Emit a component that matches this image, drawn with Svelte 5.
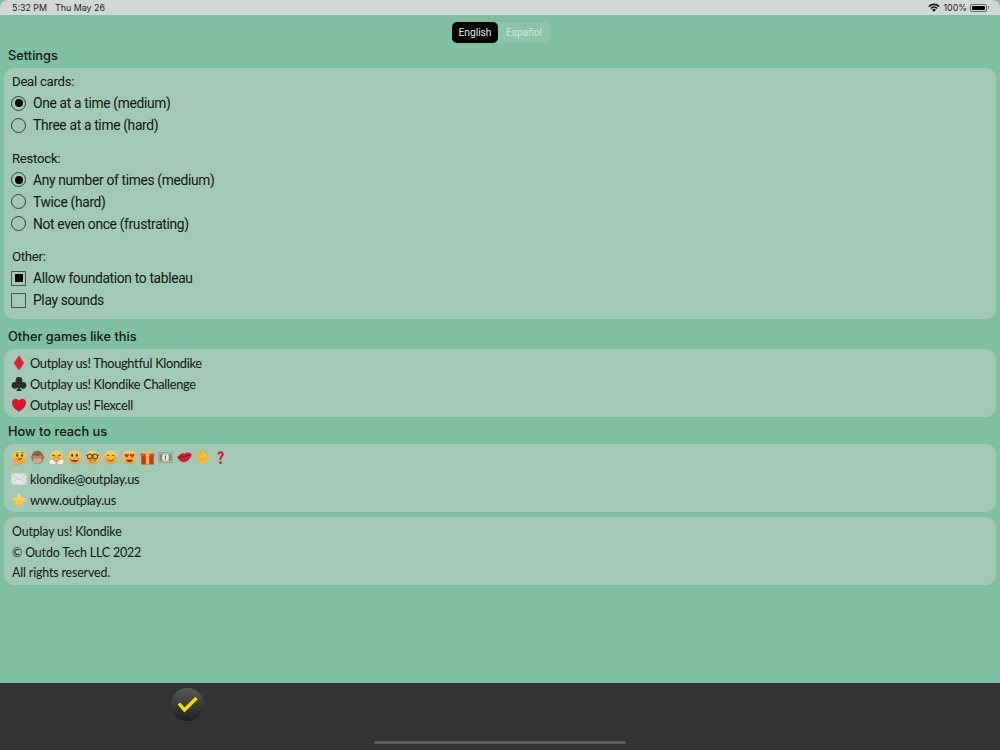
<script>
    const dealOptions = [
        { label: 'One at a time (medium)', on: true },
        { label: 'Three at a time (hard)', on: false }
    ];
    const restockOptions = [
        { label: 'Any number of times (medium)', on: true },
        { label: 'Twice (hard)', on: false },
        { label: 'Not even once (frustrating)', on: false }
    ];
    const otherOptions = [
        { label: 'Allow foundation to tableau', on: true },
        { label: 'Play sounds', on: false }
    ];
    const games = [
        { suit: 'diamond', label: 'Outplay us! Thoughtful Klondike' },
        { suit: 'club', label: 'Outplay us! Klondike Challenge' },
        { suit: 'heart', label: 'Outplay us! Flexcell' }
    ];
    const faces = ['think', 'monkey', 'huff', 'smile', 'nerd', 'blush', 'love', 'gift', 'money', 'lips', 'wave', 'mark'];
</script>

<div class="screen">
    <svg class="defs" width="0" height="0">
        <defs>
            <linearGradient id="face" x1="0" y1="0" x2="0" y2="1">
                <stop offset="0" stop-color="#fbd75c" />
                <stop offset="1" stop-color="#ee9f2a" />
            </linearGradient>
            <linearGradient id="star" x1="0" y1="0" x2="0" y2="1">
                <stop offset="0" stop-color="#fbe27a" />
                <stop offset="1" stop-color="#f4b92f" />
            </linearGradient>
        </defs>
    </svg>

    <div class="statusbar">
        <span class="time">5:32 PM</span>
        <span class="date">Thu May 26</span>
        <span class="status-right">
            <svg width="12" height="9" viewBox="0 0 12 9" class="wifi">
                <path d="M0.3 3 A8 8 0 0 1 11.7 3 L10.6 4.1 A6.4 6.4 0 0 0 1.4 4.1 Z" fill="#111" />
                <path d="M2.2 4.9 A5.4 5.4 0 0 1 9.8 4.9 L8.7 6 A3.8 3.8 0 0 0 3.3 6 Z" fill="#111" />
                <path d="M4.1 6.8 A2.7 2.7 0 0 1 7.9 6.8 L6 8.8 Z" fill="#111" />
            </svg>
            <span>100%</span>
            <span class="battery"><span class="battery-fill"></span></span>
            <span class="battery-tip"></span>
        </span>
    </div>

    <div class="content">
        <div class="lang-row">
            <div class="lang">
                <button type="button" class="lang-btn active">English</button>
                <button type="button" class="lang-btn">Español</button>
            </div>
        </div>

        <h2 class="title first">Settings</h2>
        <section class="card settings">
            <div class="group-label">Deal cards:</div>
            {#each dealOptions as opt}
                <div class="option">
                    <span class="radio" class:on={opt.on}></span>{opt.label}
                </div>
            {/each}
            <div class="group-label spaced">Restock:</div>
            {#each restockOptions as opt}
                <div class="option">
                    <span class="radio" class:on={opt.on}></span>{opt.label}
                </div>
            {/each}
            <div class="group-label spaced">Other:</div>
            {#each otherOptions as opt}
                <div class="option">
                    <span class="check" class:on={opt.on}></span>{opt.label}
                </div>
            {/each}
        </section>

        <h2 class="title after-settings">Other games like this</h2>
        <section class="card links">
            {#each games as game}
                <div class="link">
                    <svg class="icon" width="16" height="16" viewBox="0 0 16 16">
                        {#if game.suit === 'diamond'}
                            <path d="M8 0.5 L13.2 8 L8 15.5 L2.8 8 Z" fill="#e0202c" />
                        {:else if game.suit === 'club'}
                            <circle cx="8" cy="4.4" r="3.4" fill="#2b2b2b" />
                            <circle cx="4" cy="9.3" r="3.4" fill="#2b2b2b" />
                            <circle cx="12" cy="9.3" r="3.4" fill="#2b2b2b" />
                            <path d="M7.2 7 H8.8 L9.2 13 L11 15 H5 L6.8 13 Z" fill="#2b2b2b" />
                        {:else}
                            <path d="M8 15 C4 12 1 9.6 1 5.8 C1 3.4 2.8 1.8 4.6 1.8 C6 1.8 7.2 2.5 8 3.8 C8.8 2.5 10 1.8 11.4 1.8 C13.2 1.8 15 3.4 15 5.8 C15 9.6 12 12 8 15 Z" fill="#d8152c" />
                        {/if}
                    </svg>
                    {game.label}
                </div>
            {/each}
        </section>

        <h2 class="title">How to reach us</h2>
        <section class="card links">
            <div class="emoji-row">
                {#each faces as face}
                    <svg class="emoji" width="15" height="15" viewBox="0 0 14 14">
                        {#if face === 'gift'}
                            <rect x="1.2" y="3.5" width="11.6" height="10" rx="0.6" fill="#bd3a26" />
                            <rect x="5.4" y="3.5" width="3.2" height="10" fill="#efb93a" />
                            <rect x="0.6" y="3.2" width="12.8" height="3" rx="0.5" fill="#d4482e" />
                            <rect x="5.4" y="3.2" width="3.2" height="3" fill="#f6cc4e" />
                            <path d="M7 3.4 L3.2 0.3 L1.8 3 Z M7 3.4 L10.8 0.3 L12.2 3 Z" fill="#f0c040" />
                        {:else if face === 'money'}
                            <rect x="0" y="2.4" width="14" height="9.2" rx="0.5" fill="#aebca0" stroke="#84937a" stroke-width="0.6" />
                            <rect x="1.4" y="3.8" width="2.4" height="6.4" fill="#7f8d74" />
                            <rect x="10.2" y="3.8" width="2.4" height="6.4" fill="#7f8d74" />
                            <circle cx="7" cy="7" r="3" fill="#f1eedc" />
                            <path d="M7 5 V9" stroke="#5f6e54" stroke-width="1.1" />
                        {:else if face === 'lips'}
                            <path d="M0.3 6.6 C3 3.6 5 2.4 7.2 3.4 C9.6 1.6 12.4 2.6 13.7 3.8 C13 8.4 9.4 11.6 5.8 11.4 C3.2 11.2 1.2 9 0.3 6.6 Z" fill="#cb1f35" />
                            <path d="M1.8 6.8 C5 6.2 9 6 12.6 4.4" stroke="#7e0d1d" stroke-width="0.8" fill="none" />
                        {:else if face === 'wave'}
                            <ellipse cx="7.4" cy="9.4" rx="4" ry="4.2" fill="#f3b93a" />
                            <path d="M3.9 9 L1.7 5 M5.6 7 L3.6 2.6 M7.8 6.6 L6.2 1.4 M9.8 7 L8.9 2.4" stroke="#d9952a" stroke-width="2.5" stroke-linecap="round" />
                            <path d="M3.9 9 L1.7 5 M5.6 7 L3.6 2.6 M7.8 6.6 L6.2 1.4 M9.8 7 L8.9 2.4" stroke="#f7c94c" stroke-width="1.8" stroke-linecap="round" />
                            <path d="M10.6 10 L12.4 5.6" stroke="#f3b93a" stroke-width="2.2" stroke-linecap="round" />
                        {:else if face === 'mark'}
                            <path d="M4.2 4 C4.2 0.3 10 0.3 10 4 C10 6.2 7.9 6.3 7.9 9 H6.1 C6.1 5.7 8 5.6 8 4 C8 2.6 6.2 2.6 6.1 4.2 Z" fill="#d8151f" />
                            <circle cx="7" cy="11.8" r="1.2" fill="#d8151f" />
                        {:else if face === 'monkey'}
                            <circle cx="1.6" cy="6.6" r="1.5" fill="#c99674" />
                            <circle cx="12.4" cy="6.6" r="1.5" fill="#c99674" />
                            <ellipse cx="7" cy="7" rx="5.6" ry="6.4" fill="#8d5f43" />
                            <ellipse cx="7" cy="9.4" rx="4.4" ry="3.6" fill="#d3a583" />
                            <path d="M2 6.4 C3.4 4.6 5.6 5 6.8 6.6 C8.2 5 10.6 4.6 12 6.4 L11 8 H3 Z" fill="#b9805e" />
                        {:else}
                            <circle cx="7" cy="7" r="6.6" fill="url(#face)" />
                            {#if face === 'love'}
                                <path d="M4.4 7.4 L2.3 5 C2.1 3.4 4 3.1 4.4 4.4 C4.8 3.1 6.7 3.4 6.5 5 Z M9.6 7.4 L7.5 5 C7.3 3.4 9.2 3.1 9.6 4.4 C10 3.1 11.9 3.4 11.7 5 Z" fill="#d9263a" />
                                <path d="M3.8 9 C5 11.8 9 11.8 10.2 9 Z" fill="#7a2a1c" />
                            {:else if face === 'nerd'}
                                <path d="M1 5 L13 5" stroke="#6b3f1c" stroke-width="0.9" />
                                <circle cx="4.5" cy="6" r="2.2" fill="#d9c25a" stroke="#6b3f1c" stroke-width="1" />
                                <circle cx="9.5" cy="6" r="2.2" fill="#d9c25a" stroke="#6b3f1c" stroke-width="1" />
                                <path d="M4 9.6 C5.5 11.6 8.5 11.6 10 9.6 Z" fill="#fff" stroke="#7a3f1c" stroke-width="0.6" />
                            {:else if face === 'huff'}
                                <path d="M3 4.6 L6 5.8 M11 4.6 L8 5.8" stroke="#5b3a1e" stroke-width="0.9" />
                                <path d="M4.5 7.8 H9.5 V9.4 H4.5 Z" fill="#fff" stroke="#7a3f1c" stroke-width="0.5" />
                                <circle cx="2.6" cy="11" r="2.2" fill="#f6f6f2" />
                                <circle cx="11.4" cy="11" r="2.2" fill="#f6f6f2" />
                                <circle cx="4.8" cy="12" r="1.4" fill="#f6f6f2" />
                                <circle cx="9.2" cy="12" r="1.4" fill="#f6f6f2" />
                            {:else if face === 'think'}
                                <path d="M3.4 3.4 C4.2 2.6 5.4 2.6 6 3.2 M8.2 2.6 C9 2 10.2 2.2 10.8 3" stroke="#4a2c12" stroke-width="0.7" fill="none" />
                                <ellipse cx="4.8" cy="5.2" rx="0.9" ry="1.2" fill="#4a2c12" />
                                <ellipse cx="9.4" cy="5.2" rx="0.9" ry="1.2" fill="#4a2c12" />
                                <path d="M5.6 8.8 L9.4 8" stroke="#4a2c12" stroke-width="0.9" />
                                <path d="M2 14 C1.6 12 2.6 11 3 9.4 C3.4 8 4.6 8 4.8 9.4 L7.6 10 C8.6 10.6 8 12 7 12 C7 13.2 6.4 14 5.4 14 Z" fill="#f2b53b" stroke="#c98620" stroke-width="0.4" />
                            {:else if face === 'blush'}
                                <path d="M3.4 5.6 C4 4.6 5.2 4.6 5.8 5.6 M8.2 5.6 C8.8 4.6 10 4.6 10.6 5.6" stroke="#4a2c12" stroke-width="0.8" fill="none" />
                                <path d="M4 8.6 C5.4 10.8 8.6 10.8 10 8.6" stroke="#6a3418" stroke-width="0.9" fill="none" />
                                <circle cx="3" cy="7.6" r="1.2" fill="#f39a5a" />
                                <circle cx="11" cy="7.6" r="1.2" fill="#f39a5a" />
                            {:else}
                                <ellipse cx="4.8" cy="4.8" rx="0.9" ry="1.4" fill="#4a2c12" />
                                <ellipse cx="9.2" cy="4.8" rx="0.9" ry="1.4" fill="#4a2c12" />
                                <path d="M2.8 7.4 C5 8.2 9 8.2 11.2 7.4 C10.8 12.2 3.2 12.2 2.8 7.4 Z" fill="#6a2a14" />
                                <path d="M3.4 7.8 C5.5 8.4 8.5 8.4 10.6 7.8 L10.4 9 H3.6 Z" fill="#fff" />
                            {/if}
                        {/if}
                    </svg>
                {/each}
            </div>
            <div class="link">
                <svg class="icon" width="16" height="16" viewBox="0 0 16 16">
                    <rect x="0.5" y="2.5" width="15" height="11" rx="1" fill="#e2e5e5" />
                    <path d="M1 3 L8 9 L15 3 M1 13 L6 7.5 M15 13 L10 7.5" stroke="#b4b9b9" stroke-width="0.7" fill="none" />
                </svg>
                klondike@outplay.us
            </div>
            <div class="link">
                <svg class="icon" width="16" height="16" viewBox="0 0 16 16">
                    <path d="M8 0.8 L10.2 5.6 L15.4 6.2 L11.5 9.7 L12.6 14.9 L8 12.3 L3.4 14.9 L4.5 9.7 L0.6 6.2 L5.8 5.6 Z" fill="url(#star)" />
                </svg>
                www.outplay.us
            </div>
        </section>

        <section class="card about">
            <div class="about-line">Outplay us! Klondike</div>
            <div class="about-line">© Outdo Tech LLC 2022</div>
            <div class="about-line">All rights reserved.</div>
        </section>
    </div>

    <div class="toolbar">
        <div class="done">
            <svg width="22" height="18" viewBox="0 0 22 18">
                <path d="M2 7.5 L7.5 14 L19.5 2" stroke="#fbdc00" stroke-width="3.4" fill="none" />
            </svg>
        </div>
        <div class="home-bar"></div>
    </div>
</div>

<style>
    :global(body) {
        margin: 0;
    }

    .defs {
        position: absolute;
    }

    .screen {
        width: 1000px;
        height: 750px;
        display: flex;
        flex-direction: column;
        overflow: hidden;
        background: #80c0a2;
        color: #101512;
        font-family: Roboto, "Liberation Sans", sans-serif;
    }

    .statusbar {
        height: 15px;
        flex: none;
        display: flex;
        align-items: center;
        padding: 0 11px 0 12px;
        background: #d3d7d5;
        font-family: Inter, "Liberation Sans", sans-serif;
        font-size: 8.9px;
        color: #222;
        border-radius: 8px 8px 0 0;
    }

    .date {
        margin-left: 8px;
    }

    .status-right {
        margin-left: auto;
        display: flex;
        align-items: center;
        gap: 2px;
    }

    .wifi {
        margin-right: 1px;
    }

    .battery {
        width: 17px;
        height: 8px;
        margin-left: 1px;
        padding: 1px;
        box-sizing: border-box;
        border: 0.5px solid #666;
        border-radius: 2px;
        display: flex;
    }

    .battery-fill {
        flex: 1;
        background: #000;
        border-radius: 1px;
    }

    .battery-tip {
        width: 1px;
        height: 3px;
        margin-left: -1px;
        background: #777;
    }

    .content {
        flex: 1;
        padding: 7px 4px 0;
    }

    .lang-row {
        display: flex;
        justify-content: center;
    }

    .lang {
        display: flex;
        margin-left: 2px;
        background: #8dc5ab;
        border-radius: 5px;
        width: 98px;
    }

    .lang-btn {
        height: 21px;
        padding: 0;
        border: none;
        border-radius: 5px;
        background: transparent;
        color: #d2e6dc;
        font: 400 10.2px Roboto, "Liberation Sans", sans-serif;
        flex: 1;
    }

    .lang-btn.active {
        flex: none;
        width: 46px;
        background: #000;
        color: #e8e8e8;
    }

    .title {
        margin: 0;
        padding: 7px 0 4px 4px;
        font-family: Inter, "Liberation Sans", sans-serif;
        font-size: 12.8px;
        font-weight: 500;
        line-height: 16px;
    }

    .title.first {
        padding-top: 5px;
    }

    .title.after-settings {
        padding-top: 10px;
    }

    .card {
        background: #a1c9b5;
        border-radius: 10px;
        padding-left: 7px;
    }

    .settings {
        padding-top: 4px;
        padding-bottom: 8px;
    }

    .group-label {
        font-size: 13.2px;
        letter-spacing: -0.27px;
        line-height: 20px;
        padding-left: 1px;
    }

    .group-label.spaced {
        margin-top: 13.5px;
        line-height: 18px;
        padding-bottom: 1px;
    }

    .option {
        display: flex;
        align-items: center;
        height: 22px;
        font-size: 13.8px;
        letter-spacing: -0.33px;
    }

    .radio {
        width: 15px;
        height: 15px;
        margin: 0 7px 0 0;
        box-sizing: border-box;
        border: 1.4px solid #2c3d35;
        border-radius: 50%;
        display: flex;
        align-items: center;
        justify-content: center;
        flex: none;
    }

    .radio.on::after {
        content: "";
        width: 8px;
        height: 8px;
        background: #000;
        border-radius: 50%;
    }

    .check {
        width: 15px;
        height: 15px;
        margin: 0 7px 0 0;
        box-sizing: border-box;
        border: 1.5px solid #42564c;
        display: flex;
        align-items: center;
        justify-content: center;
        flex: none;
    }

    .check.on::after {
        content: "";
        width: 8px;
        height: 8px;
        background: #000;
    }

    .links {
        padding-top: 3px;
        padding-bottom: 2px;
    }

    .link {
        display: flex;
        align-items: center;
        gap: 3px;
        height: 21px;
        font-family: Lato, "Liberation Sans", sans-serif;
        font-size: 12.8px;
        letter-spacing: -0.3px;
    }

    .icon {
        flex: none;
    }

    .emoji-row {
        display: flex;
        align-items: center;
        gap: 3.3px;
        height: 21px;
        padding-left: 1px;
    }

    .about {
        margin-top: 5px;
        padding-top: 5px;
        padding-bottom: 1px;
    }

    .about-line {
        height: 20.5px;
        line-height: 20px;
        padding-left: 1px;
        font-family: Lato, "Liberation Sans", sans-serif;
        font-size: 12.4px;
        letter-spacing: -0.15px;
    }

    .toolbar {
        height: 67px;
        flex: none;
        position: relative;
        background: #333;
    }

    .done {
        position: absolute;
        left: 171px;
        top: 5px;
        width: 33px;
        height: 33px;
        border-radius: 50%;
        background: linear-gradient(#5a5a5a, #1e1e1e);
        display: flex;
        align-items: center;
        justify-content: center;
    }

    .home-bar {
        position: absolute;
        left: 374px;
        bottom: 6px;
        width: 252px;
        height: 3px;
        border-radius: 2px;
        background: #5c5c5c;
    }
</style>
